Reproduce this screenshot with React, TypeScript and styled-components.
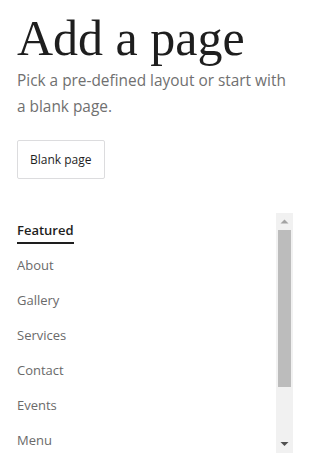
import React from "react";
import styled, { createGlobalStyle } from "styled-components";

const Global = createGlobalStyle`
  html, body { margin: 0; padding: 0; background: #fff; }
  body { font-family: "Open Sans", "Noto Sans", sans-serif; color: #1e1e1e; }
`;

const Page = styled.div`
  display: flex;
  flex-direction: column;
  padding: 9px 19px 0 17px;
  height: 462px;
  box-sizing: border-box;
`;

const Title = styled.h1`
  margin: 0;
  font-family: "Liberation Serif", serif;
  font-weight: 400;
  font-size: 50px;
  line-height: 59px;
  color: #1e1e1e;
`;

const Subtitle = styled.p`
  margin: 0;
  font-size: 15.4px;
  line-height: 26px;
  color: #707070;
`;

const BlankButton = styled.button`
  align-self: flex-start;
  margin-top: 20px;
  height: 39px;
  padding: 0 12px;
  background: #fff;
  border: 1px solid #dcdcde;
  border-radius: 2px;
  font-family: inherit;
  font-size: 12px;
  color: #1e1e1e;
`;

const CategoryPanel = styled.div`
  margin-top: 34px;
  height: 240px;
  display: flex;
`;

const CategoryViewport = styled.div`
  flex: 1;
  overflow: hidden;
`;

const CategoryList = styled.ul`
  list-style: none;
  margin: 0;
  padding: 0;
`;

const CategoryItem = styled.li<{ $active?: boolean }>`
  height: 35px;
  display: flex;
  align-items: center;
  font-size: 13px;
  color: ${(p) => (p.$active ? "#1e1e1e" : "#6a6a6a")};
  font-weight: ${(p) => (p.$active ? 600 : 400)};
`;

const CategoryLabel = styled.span<{ $active?: boolean }>`
  padding: 4px 0 3px;
  border-bottom: 2px solid ${(p) => (p.$active ? "#1e1e1e" : "transparent")};
`;

const ScrollBar = styled.div`
  width: 17px;
  flex: none;
  display: flex;
  flex-direction: column;
  background: #f1f1f1;
`;

const ScrollArrow = styled.div`
  height: 17px;
  flex: none;
  display: flex;
`;

const ScrollTrack = styled.div`
  flex: 1;
  display: flex;
  flex-direction: column;
  padding: 0 2px;
`;

const ScrollThumb = styled.div`
  background: #bcbcbc;
  flex: none;
`;

const categories = [
  "Featured",
  "About",
  "Gallery",
  "Services",
  "Contact",
  "Events",
  "Menu",
];

const TOTAL_ROWS = 9;

export default function App() {
  const visible = 240;
  const content = TOTAL_ROWS * 35;
  const trackLen = visible - 34;
  const thumbLen = Math.round((trackLen * visible) / content);
  return (
    <>
      <Global />
      <Page>
        <Title>Add a page</Title>
        <Subtitle>Pick a pre-defined layout or start with a blank page.</Subtitle>
        <BlankButton>Blank page</BlankButton>
        <CategoryPanel>
          <CategoryViewport>
            <CategoryList>
              {categories.map((c, i) => (
                <CategoryItem key={c} $active={i === 0}>
                  <CategoryLabel $active={i === 0}>{c}</CategoryLabel>
                </CategoryItem>
              ))}
            </CategoryList>
          </CategoryViewport>
          <ScrollBar>
            <ScrollArrow>
              <svg width="17" height="17" viewBox="0 0 17 17">
                <polygon points="4.5,10.5 12.5,10.5 8.5,6.5" fill="#a3a3a3" />
              </svg>
            </ScrollArrow>
            <ScrollTrack>
              <ScrollThumb style={{ height: thumbLen }} />
            </ScrollTrack>
            <ScrollArrow>
              <svg width="17" height="17" viewBox="0 0 17 17">
                <polygon points="4.5,6 12.5,6 8.5,10" fill="#505050" />
              </svg>
            </ScrollArrow>
          </ScrollBar>
        </CategoryPanel>
      </Page>
    </>
  );
}
